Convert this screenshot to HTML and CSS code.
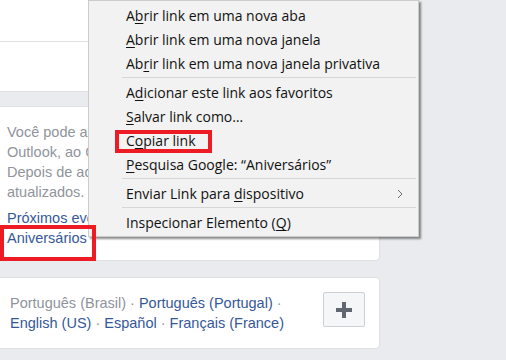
FILE: index.html
```html
<!DOCTYPE html>
<html lang="pt-BR">
<head>
<meta charset="utf-8">
<title>Eventos</title>
<link rel="stylesheet" href="styles.css">
</head>
<body>
<div class="page">
  <div class="column">
    <section class="card card-top">
      <div class="card-head"></div>
      <div class="card-body"></div>
    </section>
    <section class="card card-events">
      <p class="desc">
        <span>Você pode adicionar seus eventos ao Microsoft</span>
        <span>Outlook, ao Google Agenda ou a outro aplicativo.</span>
        <span>Depois de adicionados, os eventos ficarão</span>
        <span>atualizados.</span>
      </p>
      <div class="links">
        <a href="#">Próximos eventos</a>
        <a href="#">Aniversários</a>
      </div>
    </section>
    <section class="card card-lang">
      <p class="langs">
        <span class="cur">Português (Brasil)</span><span class="dot"> · </span><a href="#">Português (Portugal)</a><span class="dot"> · </span><a href="#">English (US)</a><span class="dot"> · </span><a href="#">Español</a><span class="dot"> · </span><a href="#">Français (France)</a>
      </p>
      <button class="add" type="button" aria-label="Mais idiomas">
        <svg width="16" height="16" viewBox="0 0 16 16"><rect x="6" y="0" width="4" height="16" fill="#606770"/><rect x="0" y="6" width="16" height="4" fill="#606770"/></svg>
      </button>
    </section>
  </div>

  <div class="menu">
    <div class="item">A<u>b</u>rir link em uma nova aba</div>
    <div class="item"><u>A</u>brir link em uma nova janela</div>
    <div class="item">Ab<u>r</u>ir link em uma nova janela privativa</div>
    <div class="sep"></div>
    <div class="item">A<u>d</u>icionar este link aos favoritos</div>
    <div class="item"><u>S</u>alvar link como…</div>
    <div class="item">C<u>o</u>piar link</div>
    <div class="item"><u>P</u>esquisa Google: “Aniversários”</div>
    <div class="sep"></div>
    <div class="item sub"><span>Enviar Link para <u>d</u>ispositivo</span>
      <svg class="chev" width="6" height="10" viewBox="0 0 6 10"><path d="M1 1 L5 5 L1 9" fill="none" stroke="#6d6d6d" stroke-width="1"/></svg>
    </div>
    <div class="sep"></div>
    <div class="item">Inspecionar Elemento (<u>Q</u>)</div>
  </div>

  <div class="mark mark-copy"></div>
  <div class="mark mark-bday"></div>
</div>
</body>
</html>
```

FILE: styles.css
```css
html, body {
  margin: 0;
  padding: 0;
}

body {
  background: #e9ebee;
  font-family: "Liberation Sans", Arial, sans-serif;
  font-size: 14.5px;
  color: #1d2129;
  width: 506px;
  height: 360px;
  overflow: hidden;
}

.page {
  position: relative;
  height: 360px;
}

.column {
  width: 384px;
  margin-left: -4px;
  display: flex;
  flex-direction: column;
  gap: 14px;
}

.card {
  background: #fff;
  border: 1px solid #dddfe2;
  border-radius: 4px;
  overflow: hidden;
}

.card-top {
  border-top: none;
  border-radius: 0 0 4px 4px;
  height: 92px;
  box-sizing: border-box;
}

.card-head {
  height: 41px;
  border-bottom: 1px solid #dddfe2;
}

.card-events {
  padding: 15px 8px 12px 10px;
}

.desc {
  margin: 0;
  color: #90949c;
  line-height: 20px;
}

.desc span {
  display: block;
  white-space: nowrap;
}

.links {
  margin-top: 6px;
  display: flex;
  flex-direction: column;
  line-height: 20px;
}

.links a,
.langs a {
  color: #365899;
  text-decoration: none;
}

.card-lang {
  margin-top: 2px;
  display: flex;
  align-items: flex-start;
  justify-content: space-between;
  padding: 14px 14px 15px 13px;
}

.langs {
  margin: 1px 0 0;
  width: 306px;
  line-height: 20px;
}

.langs .cur {
  color: #90949c;
}

.langs .dot {
  color: #90949c;
}

.add {
  width: 42px;
  height: 35px;
  padding: 0;
  background: #f5f6f7;
  border: 1px solid #ccd0d5;
  border-radius: 2px;
  display: flex;
  align-items: center;
  justify-content: center;
}

.menu {
  position: absolute;
  left: 88px;
  top: 0;
  width: 329px;
  padding: 3px 0 1px;
  background: #f2f2f2;
  border: 1px solid #cccccc;
  box-shadow: 2px 2px 2px rgba(0, 0, 0, 0.45);
  font-family: "Open Sans", "Noto Sans", sans-serif;
  font-size: 14px;
  color: #111;
}

.item {
  height: 24px;
  line-height: 24px;
  padding: 0 15px 0 37px;
  white-space: nowrap;
}

.item u {
  text-decoration-thickness: 1px;
  text-underline-offset: 2px;
}

.sub {
  display: flex;
  align-items: center;
  justify-content: space-between;
}

.sep {
  height: 1px;
  margin: 1px 2px 3px 33px;
  background: #d6d6d6;
}

.mark {
  position: absolute;
  border: 4px solid #ed1c24;
  box-sizing: border-box;
}

.mark-copy {
  left: 115px;
  top: 130px;
  width: 97px;
  height: 23px;
}

.mark-bday {
  left: 0;
  top: 225px;
  width: 96px;
  height: 36px;
}
```
